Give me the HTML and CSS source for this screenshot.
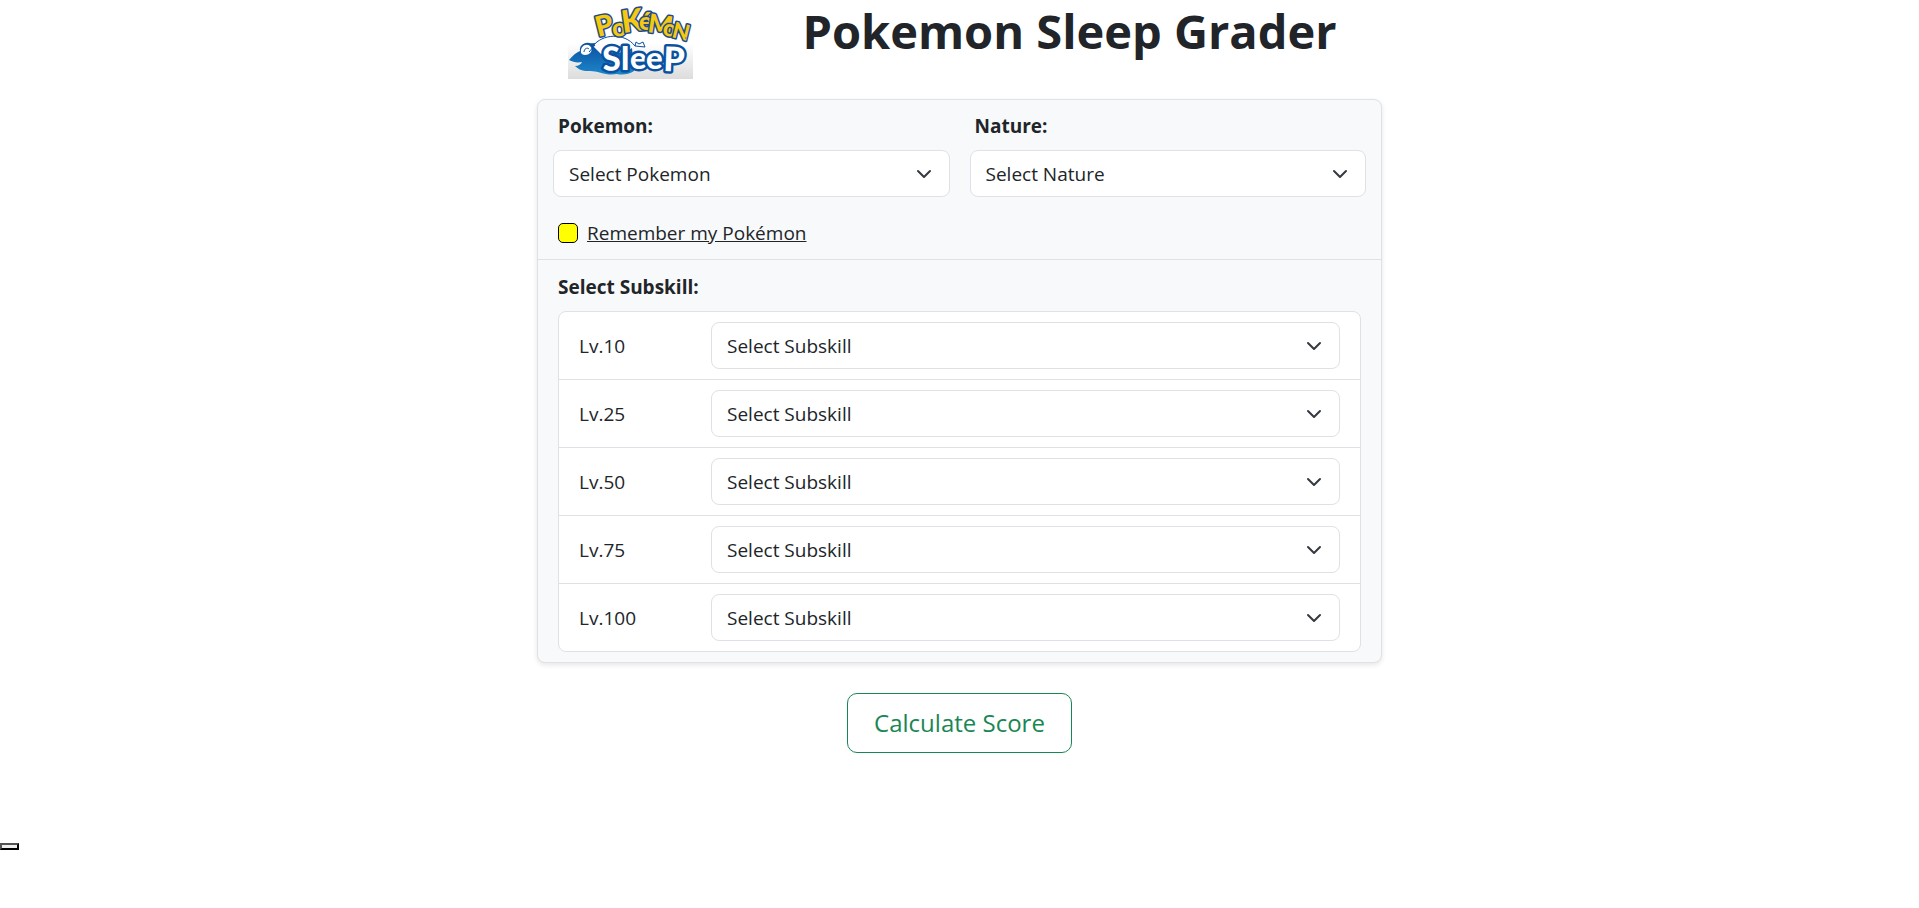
FILE: index.html
```html
<!DOCTYPE html>
<html lang="en">
<head>
    <meta charset="UTF-8">
    <meta name="viewport" content="width=device-width, initial-scale=1">
    <title>Pokemon Sleep Grader</title>
    <link rel="stylesheet" href="styles.css">
</head>
<body>
    <main class="container">
        <header class="header">
            <svg class="logo" viewBox="0 0 125 79" role="img" aria-label="Pokémon Sleep">
                <defs>
                    <linearGradient id="floor" x1="0" y1="0" x2="0" y2="1">
                        <stop offset="0.55" stop-color="#fff"/>
                        <stop offset="1" stop-color="#dcdcdc"/>
                    </linearGradient>
                    <linearGradient id="night" x1="0" y1="0" x2="0" y2="1">
                        <stop offset="0" stop-color="#0a4f9e"/>
                        <stop offset="1" stop-color="#1c86cb"/>
                    </linearGradient>
                </defs>
                <rect width="125" height="79" fill="url(#floor)"/>
                <!-- sleeping body -->
                <path d="M1 60C5 55 9 52 12 51C11 46 16 42 21 43C27 44 31 42 35 42L50 48L64 48L66 71C60 75 54 75 49 74C37 76 29 70 20 71C14 71 10 69 7 66C11 66 13 64 14 62C9 63 5 62 1 60Z" fill="url(#night)"/>
                <path d="M25 46C34 34 56 32 67 46L58 52L33 54Z" fill="#fff"/>
                <path d="M25 46C34 34 56 32 67 46" fill="none" stroke="#0a4f9e" stroke-width="1"/>
                <path d="M13 53C12 46 18 43 22 46C26 50 22 55 17 55C15 55 14 54 13 53Z" fill="#fff"/>
                <path d="M16 52C16 49 19 47 21 49M21 52L27 45" fill="none" stroke="#0a4f9e" stroke-width="1"/>
                <path d="M67 46L68 42L71 44L75 42L77 47Z" fill="#fff" stroke="#0a4f9e" stroke-width="1"/>
                <g class="logo-top">
                    <text transform="translate(30 37) rotate(-14)" font-size="28">P</text>
                    <text transform="translate(45 37) rotate(-7)" font-size="25">o</text>
                    <text transform="translate(55 33) rotate(-8)" font-size="31">K</text>
                    <text transform="translate(71 30)" font-size="25">é</text>
                    <text transform="translate(79 32) rotate(8)" font-size="26">M</text>
                    <text transform="translate(94 35) rotate(10)" font-size="23">o</text>
                    <text transform="translate(103 37) rotate(14)" font-size="22">N</text>
                </g>
                <g class="logo-bottom">
                    <text transform="translate(35 71) rotate(-3)" font-size="33">S</text>
                    <text transform="translate(53 70)" font-size="33">l</text>
                    <text transform="translate(62 69)" font-size="31">e</text>
                    <text transform="translate(78 69)" font-size="31">e</text>
                    <text transform="translate(95 71) rotate(2)" font-size="34">P</text>
                </g>
                <circle cx="118" cy="38" r="1" fill="#889"/>
            </svg>
            <h1 class="title">Pokemon Sleep Grader</h1>
        </header>

        <section class="card">
            <div class="card-top">
                <div class="fields">
                    <div class="field">
                        <label class="field-label" for="pokemonSelect">Pokemon:</label>
                        <select class="form-select" id="pokemonSelect">
                            <option>Select Pokemon</option>
                        </select>
                    </div>
                    <div class="field">
                        <label class="field-label" for="natureSelect">Nature:</label>
                        <select class="form-select" id="natureSelect">
                            <option>Select Nature</option>
                        </select>
                    </div>
                </div>
                <div class="remember">
                    <input type="checkbox" class="form-check" id="rememberCheck">
                    <label class="remember-label" for="rememberCheck">Remember my Pokémon</label>
                </div>
            </div>

            <div class="card-bottom">
                <h2 class="subskill-title">Select Subskill:</h2>
                <ul class="subskill-list">
                    <li class="subskill-row">
                        <label for="subskill10">Lv.10</label>
                        <select class="form-select" id="subskill10">
                            <option>Select Subskill</option>
                        </select>
                    </li>
                    <li class="subskill-row">
                        <label for="subskill25">Lv.25</label>
                        <select class="form-select" id="subskill25">
                            <option>Select Subskill</option>
                        </select>
                    </li>
                    <li class="subskill-row">
                        <label for="subskill50">Lv.50</label>
                        <select class="form-select" id="subskill50">
                            <option>Select Subskill</option>
                        </select>
                    </li>
                    <li class="subskill-row">
                        <label for="subskill75">Lv.75</label>
                        <select class="form-select" id="subskill75">
                            <option>Select Subskill</option>
                        </select>
                    </li>
                    <li class="subskill-row">
                        <label for="subskill100">Lv.100</label>
                        <select class="form-select" id="subskill100">
                            <option>Select Subskill</option>
                        </select>
                    </li>
                </ul>
            </div>
        </section>

        <button type="button" class="calculate-btn">Calculate Score</button>
    </main>

    <button type="button" class="empty-btn" aria-label="Close"></button>
</body>
</html>
```

FILE: styles.css
```css
* {
    box-sizing: border-box;
}
body {
    margin: 0;
    font-family: "Segoe UI", "Open Sans", "Noto Sans", sans-serif;
    font-size: 19px;
    line-height: 32px;
    color: #212529;
    background-color: #fff;
}
.container {
    display: flex;
    flex-direction: column;
    align-items: center;
    max-width: 845px;
    margin: 0 auto;
}
/* Header */
.header {
    display: grid;
    grid-template-columns: 220px 1fr;
    width: 100%;
    margin-bottom: 20px;
}
.logo {
    display: block;
    width: 125px;
    margin-left: 31px;
}
.logo-top text {
    font-family: Lato, sans-serif;
    font-weight: 900;
    fill: #f5c90f;
    stroke: #1f4b8e;
    stroke-width: 3px;
    stroke-linejoin: round;
    paint-order: stroke;
}
.logo-bottom text {
    font-family: Lato, sans-serif;
    font-weight: 900;
    fill: #fff;
    stroke: #0a519f;
    stroke-width: 5px;
    stroke-linejoin: round;
    paint-order: stroke;
}
.title {
    margin: 0;
    font-size: 47px;
    line-height: 62px;
    font-weight: 700;
    text-align: center;
    white-space: nowrap;
}
/* Card */
.card {
    width: 100%;
    border: 1px solid #dee2e6;
    border-radius: 8px;
    background-color: #f8f9fa;
    box-shadow: 0 2px 5px rgba(0,0,0,0.1);
}
.card-top {
    padding: 10px 15px;
    border-bottom: 1px solid #dee2e6;
}
.fields {
    display: grid;
    grid-template-columns: 1fr 1fr;
    gap: 20px;
    margin-bottom: 20px;
}
.field-label {
    display: block;
    margin: 0 5px 8px;
    font-weight: 700;
}
.form-select {
    display: block;
    width: 100%;
    height: 47px;
    padding: 0 45px 0 15px;
    border: 1px solid #dee2e6;
    border-radius: 8px;
    font: inherit;
    color: inherit;
    appearance: none;
    background: #fff url("data:image/svg+xml,%3csvg xmlns='http://www.w3.org/2000/svg' viewBox='0 0 16 16'%3e%3cpath fill='none' stroke='%23343a40' stroke-linecap='round' stroke-linejoin='round' stroke-width='2' d='m2 5 6 6 6-6'/%3e%3c/svg%3e") no-repeat right 17px center / 16px 16px;
}
.remember {
    display: flex;
    align-items: center;
    gap: 9px;
    margin: 0 5px;
}
.form-check {
    width: 20px;
    height: 20px;
    margin: 0;
    border: 1px solid #000;
    border-radius: 5px;
    background-color: #ff0;
    appearance: none;
}
.remember-label {
    text-decoration: underline;
}
.card-bottom {
    padding: 11px 20px 10px;
}
.subskill-title {
    margin: 0 0 8px;
    font-size: 19px;
    line-height: 32px;
    font-weight: 700;
}
.subskill-list {
    margin: 0;
    padding: 0;
    list-style: none;
    border: 1px solid #dee2e6;
    border-radius: 8px;
    background-color: #fff;
}
.subskill-row {
    display: grid;
    grid-template-columns: 132px 1fr;
    align-items: center;
    padding: 10px 20px;
}
.subskill-row + .subskill-row {
    border-top: 1px solid #dee2e6;
}
/* Buttons */
.calculate-btn {
    margin-top: 30px;
    padding: 10px 26px;
    border: 1px solid #198754;
    border-radius: 10px;
    font-family: inherit;
    font-size: 24px;
    line-height: 38px;
    color: #198754;
    background-color: #fff;
    cursor: pointer;
}
.empty-btn {
    display: block;
    margin-top: 90px;
    padding: 1px 7px 2px 8px;
    border: 2px outset #000;
    background-color: #efefef;
}
```
